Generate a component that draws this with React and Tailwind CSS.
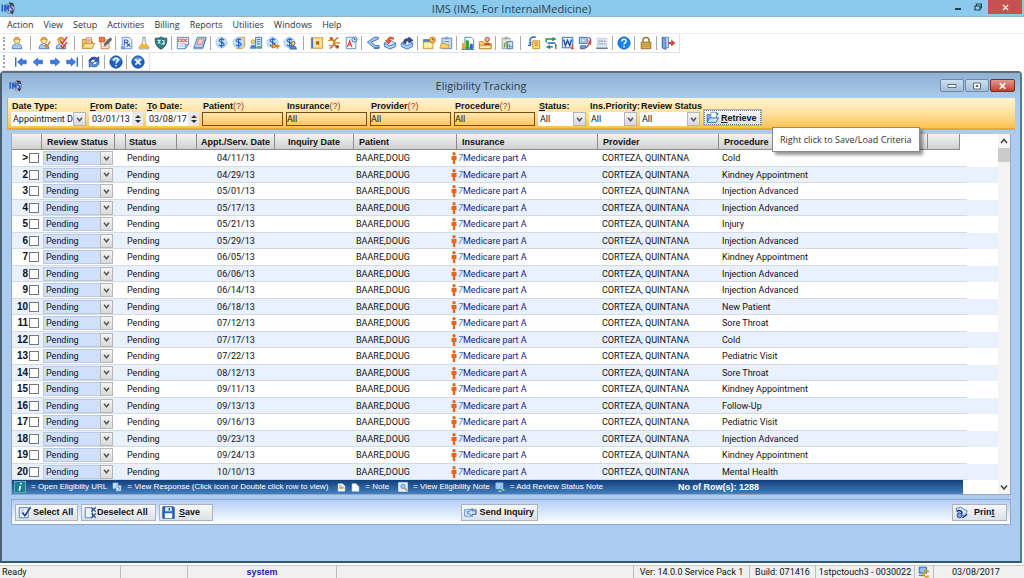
import { useState } from 'react';

const menuItems = ['Action', 'View', 'Setup', 'Activities', 'Billing', 'Reports', 'Utilities', 'Windows', 'Help'];

const rows = [
  ['04/11/13', 'Cold'],
  ['04/29/13', 'Kindney Appointment'],
  ['05/01/13', 'Injection Advanced'],
  ['05/17/13', 'Injection Advanced'],
  ['05/21/13', 'Injury'],
  ['05/29/13', 'Injection Advanced'],
  ['06/05/13', 'Kindney Appointment'],
  ['06/06/13', 'Injection Advanced'],
  ['06/14/13', 'Injection Advanced'],
  ['06/18/13', 'New Patient'],
  ['07/12/13', 'Sore Throat'],
  ['07/17/13', 'Cold'],
  ['07/22/13', 'Pediatric Visit'],
  ['08/12/13', 'Sore Throat'],
  ['09/11/13', 'Kindney Appointment'],
  ['09/13/13', 'Follow-Up'],
  ['09/16/13', 'Pediatric Visit'],
  ['09/23/13', 'Injection Advanced'],
  ['09/24/13', 'Kindney Appointment'],
  ['10/10/13', 'Mental Health'],
];

const person = (
  <>
    <path d="M2.500 14.500c0-4 2-5.500 5.500-5.500s5.500 1.500 5.500 5.500z" fill="#a9cdf5" stroke="#3f74bd" />
    <path d="M6.500 9l1.500 2.500 1.500-2.500" fill="#fff" stroke="#6f9bd2" strokeWidth=".7" />
    <circle cx="8" cy="5" r="3.600" fill="#fbe0ac" stroke="#c9902f" />
    <path d="M4.400 4.800C4 1 12 1 11.600 4.800 10 3.500 6.500 3.500 4.400 4.800z" fill="#e8b53c" stroke="#b5812a" strokeWidth=".6" />
  </>
);

const dollar = (
  <>
    <path d="M7 1l5 2 2 5-2 4-5 2-5-3-1-5 2-3z" fill="#cfe4fb" stroke="#8fbbe9" strokeWidth=".8" />
    <path d="M10.500 4.700C9 3 4.700 3.300 4.800 5.400c.1 2.200 5.700 1.600 5.700 4 0 2.200-4.500 2.400-6 .6M7.600 2v11.500" fill="none" stroke="#2a6cc4" strokeWidth="1.400" />
  </>
);

const blueDisc = (
  <>
    <circle cx="8" cy="8" r="7" fill="#1f62c9" stroke="#123f8f" />
    <path d="M2.500 6C4 1.500 12 1.500 13.500 6 10 8 6 8 2.500 6z" fill="#8dbdf3" opacity=".7" />
  </>
);

const question = (
  <>
    <path d="M5.600 6.200c0-3.400 5-3.200 4.900-.3C10.400 7.600 8 7.800 8 9.800" fill="none" stroke="#fff" strokeWidth="1.700" />
    <circle cx="8" cy="12" r="1" fill="#fff" />
  </>
);

const page = <path d="M2.500 1.500h8l3 3v10h-11z" fill="#f3f8ff" stroke="#5b87c5" />;

const glyphs = {
  user: person,
  userCheck: (
    <>
      {person}
      <path d="M9 10l2 3 4-7" fill="none" stroke="#e2722b" strokeWidth="1.700" />
    </>
  ),
  userChecks: (
    <>
      {person}
      <path d="M7 5l2.500 3.500L15 1M8 11l2 3 4.500-7" fill="none" stroke="#df3f23" strokeWidth="1.800" />
    </>
  ),
  folder: (
    <>
      <path d="M1.500 14V4h4l1.500 2h6v8z" fill="#f3c45a" stroke="#c58a26" />
      <path d="M6 2h6v7H6z" fill="#fff" stroke="#bf7b3b" />
      <path d="M8 3.500v4M10 3.500v4" stroke="#d0502e" />
      <path d="M1.500 14l2.500-5.500h11.500L13 14z" fill="#ffe09a" stroke="#c58a26" />
    </>
  ),
  edit: (
    <>
      <path d="M3.500 4.500h9v10h-9z" fill="#fff3e0" stroke="#d26d32" />
      <path d="M1.500 1.500h6v5h-6z" fill="#ef7b3e" stroke="#c8501d" />
      <path d="M5.500 8h5M5.500 12h5" stroke="#d99a72" />
      <path d="M7 11l1-3 6-6 2 2-6 6z" fill="#5f6d7a" stroke="#2e3a46" strokeWidth=".6" />
    </>
  ),
  rx: (
    <>
      {page}
      <path d="M5 11V4.500h2.500c2.300 0 2.300 3 0 3H5M7 7.500l5 5M11.500 8.500l-4 4" fill="none" stroke="#2458a8" strokeWidth="1.200" />
      <path d="M1 12h5v3H1z" fill="#6d9ad6" />
    </>
  ),
  flask: (
    <>
      <path d="M6 1.500h4M6.700 2v5L2 13.500c0 1 .5 1.200 1.200 1.200h9.600c.7 0 1.200-.2 1.200-1.200L9.300 7V2" fill="#fffbe8" stroke="#7c8fa8" />
      <path d="M5 9h6l3 5H2z" fill="#f5b82e" />
    </>
  ),
  shield: (
    <>
      <path d="M8 1c2 1.500 4.500 1.700 6.500 1.500C15 9 12.500 13 8 15 3.500 13 1 9 1.500 2.500 3.500 2.700 6 2.500 8 1z" fill="#2f7f86" stroke="#1c4b58" />
      <path d="M4 5h3L5 8h2.500M9 5.500c3-1.500 4 1 .5 3.500h3" fill="none" stroke="#d6f3f0" strokeWidth="1.200" />
    </>
  ),
  doc: (
    <>
      <path d="M1.500 1.500h13v8l-4 5h-9z" fill="#fff" stroke="#4d75b8" />
      <path d="M3 3.500h3v3H3zM7 3.500h2.500v3H7zM13.500 3.500H11v3h2.500" fill="none" stroke="#d04a35" />
      <path d="M3 9h8M3 11.500h6" stroke="#8aa6d4" />
      <path d="M10.500 14.500v-5h4z" fill="#9fc0ef" stroke="#4d75b8" strokeWidth=".7" />
    </>
  ),
  book: (
    <>
      <path d="M5 1.500h10L11 13H1z" fill="#b8d6f8" stroke="#4879bd" />
      <path d="M6.500 3.500h6l-2.500 6H4.200z" fill="#f9cfc3" stroke="#d8694c" strokeWidth=".8" />
      <path d="M1 13v1.500h10L15 3" fill="none" stroke="#4879bd" />
    </>
  ),
  dollar,
  dollarNote: (
    <>
      <path d="M8.500 1.500h6v10l-3 3h-6z" fill="#ffe3a0" stroke="#d08f2c" />
      {dollar}
    </>
  ),
  dollarDesk: (
    <>
      <path d="M7.500 1.500h7v12h-7z" fill="#cfe2fa" stroke="#386db5" />
      <path d="M9 4h4M9 6.500h4M9 9h4" stroke="#386db5" />
      <circle cx="4.500" cy="6.500" r="2.300" fill="#f8cf83" stroke="#b5812a" strokeWidth=".7" />
      <path d="M1 14.500c0-6 7.500-6 7.500 0z" fill="#4b86d1" />
      <path d="M9 14.500h6v-3H9z" fill="#58b26a" />
    </>
  ),
  dollarKey: (
    <>
      {dollar}
      <path d="M9 11.500h6.500M13 11.500v3" stroke="#dc8620" strokeWidth="2.200" />
      <circle cx="9" cy="11.500" r="2" fill="#f6b13f" stroke="#b96c15" />
    </>
  ),
  dollarUser: (
    <>
      {dollar}
      <circle cx="11.500" cy="8.500" r="2.200" fill="#f8cf83" stroke="#5b4a26" strokeWidth=".8" />
      <path d="M8 15c0-5 7.500-5 7.500 0z" fill="#4b86d1" stroke="#274e87" strokeWidth=".6" />
    </>
  ),
  calendar: (
    <>
      <path d="M1.500 2h13v12h-13z" fill="#ffd95c" stroke="#c58a26" />
      <path d="M5 2v12M8 2v12M11.500 2v12M2 5h12M2 8h12M2 11h12" stroke="#fff4c4" strokeWidth=".8" />
      <path d="M7 6h3.500v4H7z" fill="#b4631b" />
      <path d="M1.500 2v12h2V2z" fill="#4b79bf" />
    </>
  ),
  helix: (
    <>
      <path d="M3 2c8 1 3 11 10 12M13 2C6 3 10 13 3 14" fill="none" stroke="#c5782a" strokeWidth="1.700" />
      <path d="M1 5h7M8 8h7M2 11h5" stroke="#d9912f" strokeWidth="1.500" />
      <circle cx="5" cy="3" r="1.700" fill="#c94e2a" />
      <circle cx="12" cy="12" r="1.700" fill="#88502a" />
    </>
  ),
  letter: (
    <>
      {page}
      <path d="M4 12.500l2.500-7 2.500 7M5 10h3.500" fill="none" stroke="#d04632" strokeWidth="1.300" />
      <circle cx="12" cy="4" r="3" fill="#cfe2fa" stroke="#386db5" />
      <path d="M12 2.500V4h1.500" fill="none" stroke="#274e87" />
    </>
  ),
  fold: (
    <>
      <path d="M14 1.500H9.500L1.500 7l8 6.500h5.500v-2.500h-4L6 7l8-3.500z" fill="#a5cbf5" stroke="#2d62ad" />
      <path d="M9 14h6" stroke="#2d62ad" strokeWidth="1.300" />
    </>
  ),
  boxIn: (
    <>
      <path d="M1.500 8l6.500 3 6.500-3v4L8 15l-6.500-3z" fill="#a9ccf5" stroke="#3d74bf" />
      <path d="M1.500 8L8 5l6.500 3L8 11z" fill="#e3effd" stroke="#3d74bf" strokeWidth=".8" />
      <path d="M12 2C8 0 5 2 5 5H2.500l4 4 3-4H7.500c0-2 2-2.500 4.500-1z" fill="#e55a33" stroke="#ad3413" strokeWidth=".6" />
    </>
  ),
  boxOut: (
    <>
      <path d="M1.500 8l6.500 3 6.500-3v4L8 15l-6.500-3z" fill="#a9ccf5" stroke="#3d74bf" />
      <path d="M1.500 8L8 5l6.500 3L8 11z" fill="#e3effd" stroke="#3d74bf" strokeWidth=".8" />
      <path d="M4 8c0-4 2-5.500 6-5.200V1l5 4-5 3V5.500C7.500 5.300 6.500 6 6.500 9z" fill="#2b4b8c" stroke="#182c58" strokeWidth=".6" />
    </>
  ),
  schedule: (
    <>
      <path d="M1.500 4h11v10.500h-11z" fill="#ffdf83" stroke="#c5872b" />
      <path d="M1.500 4h11v3h-11z" fill="#4f86d0" />
      <path d="M5 7.500V14M9 7.500V14M2 10.500h10" stroke="#fff" />
      <circle cx="12" cy="4.500" r="3.300" fill="#ffc158" stroke="#c4701b" />
      <path d="M12 2.500v2h2" fill="none" stroke="#8c4a10" />
    </>
  ),
  clipboard: (
    <>
      <path d="M3.500 2.500h11v12h-11z" fill="#cbdffa" stroke="#4d7cc0" />
      <path d="M7 1h4v3H7z" fill="#86a7d6" />
      <path d="M6 6.500h6" stroke="#4d7cc0" />
      <path d="M1 14l1.500-5.500h4L8 10h4l-1.500 4z" fill="#ffd36b" stroke="#c18226" strokeWidth=".8" />
    </>
  ),
  chart: (
    <>
      <path d="M4.500 1.500h7l3 3v9h-10z" fill="#fff" stroke="#4879bd" />
      <path d="M1 8h3.500v7H1z" fill="#f0a932" />
      <path d="M5.500 5h3.500v10H5.500z" fill="#2f9d43" />
      <path d="M10 9h3.500v6H10z" fill="#2e66b8" />
      <path d="M.5 15.300h15" stroke="#275ba8" />
    </>
  ),
  folderUser: (
    <>
      <path d="M1.500 14.500v-8h5l1.500 2h7v6z" fill="#ffd36b" stroke="#c18226" />
      <circle cx="10.500" cy="4" r="2.500" fill="#f6b58a" stroke="#a3402a" />
      <path d="M6.500 10.500c0-4 8-4 8 0z" fill="#cf4a32" />
      <path d="M1.500 14.500v-4h13.500v4z" fill="#ffe7a8" stroke="#c18226" />
    </>
  ),
  report: (
    <>
      <path d="M2.500 2.500h9v12h-9z" fill="#ece7da" stroke="#8d99ae" />
      <path d="M5 1h4v3H5z" fill="#9caac2" />
      <path d="M5 13V8M7 13V6" stroke="#5aa65e" strokeWidth="1.300" />
      <path d="M8.500 6.500h6v8h-6z" fill="#d7e8fc" stroke="#3c6eb4" />
      <path d="M10.500 13V9.500M12.500 13V11" stroke="#3c6eb4" strokeWidth="1.200" />
    </>
  ),
  copyNote: (
    <>
      <path d="M6.500 5.500h8v9h-8z" fill="#ffdc72" stroke="#c5872b" />
      <path d="M8.500 8h4M8.500 10.500h4" stroke="#a66a1c" />
      <path d="M10 1.500C5 .5 2.500 3 4 6M1.500 10c1 1.500 2.500 1 3-1" fill="none" stroke="#2d62ad" strokeWidth="1.700" />
      <path d="M1.500 6.500h4L3.500 10z" fill="#2d62ad" />
    </>
  ),
  transfer: (
    <>
      <path d="M2.500 7V3.500H10M13.500 9v3.500" fill="none" stroke="#2f8f49" strokeWidth="1.700" />
      <path d="M9.500 1l5 2.500-5 2.500zM7 10l-5 2.500L7 15z" fill="#2f8f49" />
      <path d="M4 8h9M7 12.500h3" stroke="#3c78cc" strokeWidth="2" />
      <path d="M13.500 12v3" stroke="#dc4b2c" strokeWidth="1.500" />
    </>
  ),
  word: (
    <>
      <path d="M1.500 1.500h12v12h-12z" fill="#e7f0fd" stroke="#2c5cab" />
      <path d="M3 4l2 7 2.500-6L10 11l2-7" fill="none" stroke="#2451a3" strokeWidth="1.700" />
      <path d="M13 9.500v5M11.500 14.500h3" stroke="#d94329" strokeWidth="1.300" />
    </>
  ),
  card: (
    <>
      <path d="M1.500 1.500h9v7h-9z" fill="#bcd7f8" stroke="#2c5cab" />
      <path d="M4 3.500h4v3H4z" fill="#fff" stroke="#5c7fb5" strokeWidth=".7" />
      <path d="M3 14.500c5 0 9-2 9.500-6l2 .5V3.500l-2.500-2" fill="none" stroke="#8a4e86" strokeWidth="1.400" />
      <path d="M2.500 11h7l-2 3.500h-5z" fill="#6b94d0" stroke="#2c5cab" strokeWidth=".7" />
      <path d="M13 5v5" stroke="#e05a2d" strokeWidth="2" />
    </>
  ),
  keypad: (
    <>
      <path d="M2.500 2.500h11v12h-11z" fill="#dde7f2" stroke="#c4d1e0" />
      <path d="M4 6h2.500M7 6h2M10 6h2M4 9h2.500M7 9h2M10 9h2" stroke="#93abc8" strokeWidth="1.500" />
      <path d="M1.500 14h13" stroke="#5a6877" strokeWidth="1.400" />
    </>
  ),
  help: (
    <>
      <circle cx="8" cy="8" r="7" fill="#1783ee" stroke="#1162bd" />
      {question}
    </>
  ),
  helpDark: (
    <>
      {blueDisc}
      {question}
    </>
  ),
  lock: (
    <>
      <path d="M4.500 7V5c0-4.500 7-4.500 7 0v2" fill="none" stroke="#8d7a45" strokeWidth="1.700" />
      <path d="M2.500 7h11v7.500h-11z" fill="#e3b650" stroke="#8b6420" />
      <path d="M3 9.500h10M3 12h10" stroke="#b88a31" />
    </>
  ),
  exit: (
    <>
      <path d="M1.500 1.500h7v12h-7z" fill="#cfe0f6" stroke="#5378ae" />
      <path d="M1.500 1.500l4 2v12l-4-2z" fill="#7ba6e0" stroke="#3f6cb0" />
      <path d="M9 7h3V4.500L16 8l-4 3.500V9H9z" fill="#d8492f" stroke="#9b2c17" strokeWidth=".5" />
    </>
  ),
  first: (
    <>
      <path d="M2 2.500v11" stroke="#2a5dc4" strokeWidth="1.500" />
      <path d="M4 8l5-4.500v2.500h5v4H9v2.500z" fill="#3f7be0" stroke="#2a5dc4" strokeWidth=".8" />
    </>
  ),
  prev: <path d="M2.500 8l5-4.500v2.500H13v4H7.500v2.500z" fill="#3f7be0" stroke="#2a5dc4" strokeWidth=".8" />,
  next: <path d="M13.500 8l-5-4.500v2.500H3v4h5.500v2.500z" fill="#3f7be0" stroke="#2a5dc4" strokeWidth=".8" />,
  last: (
    <>
      <path d="M14 2.500v11" stroke="#2a5dc4" strokeWidth="1.500" />
      <path d="M12 8L7 3.500v2.500H2v4h5v2.500z" fill="#3f7be0" stroke="#2a5dc4" strokeWidth=".8" />
    </>
  ),
  refresh: (
    <>
      <path d="M2 7.500C2.500 3 8 1 11.500 3.500L13.500 2v5.500H8l2-2C7.500 4 5 5 4.500 7.500z" fill="#2a5fb5" stroke="#173a7a" strokeWidth=".7" />
      <path d="M14 8.500c-.5 4.500-6 6.500-9.500 4L2.500 14V8.500H8l-2 2c2.500 1.500 5 .5 5.500-2z" fill="#5b95df" stroke="#173a7a" strokeWidth=".7" />
    </>
  ),
  close: (
    <>
      {blueDisc}
      <path d="M5 5l6 6M11 5l-6 6" stroke="#fff" strokeWidth="1.800" />
    </>
  ),
  logo: (
    <>
      <circle cx="10" cy="8.500" r="5.500" fill="#d8c8bb" stroke="#6a5a58" strokeWidth=".7" />
      <path d="M9 1.500l5 1 1 4-4-1zM10 12l3 3.500 2-4z" fill="#3b302f" />
      <path d="M1.500 4v8M4.500 12V4.500L6.500 9l2-4.500V12M13.500 5C10 4 10 7.500 12 8c2.500.8 1.500 4.500-1.500 3.500" fill="none" stroke="#2c63d0" strokeWidth="2" />
    </>
  ),
  openFolder: (
    <>
      <path d="M1.500 13V4.500h4L7 6h6v7z" fill="#86b5ec" stroke="#1f5aa8" />
      <path d="M6 1.500h5l2 2V9H6z" fill="#fff" stroke="#3f74bd" strokeWidth=".8" />
      <path d="M1.500 14l3-5.500h11L12.500 14z" fill="#cfe4fb" stroke="#1f5aa8" />
      <path d="M12 2c2 0 2.500 1.500 2.500 3" fill="none" stroke="#2f9d63" strokeWidth="1.400" />
    </>
  ),
  selectAll: (
    <>
      <path d="M1.500 2h11v12.500h-11z" fill="#eaf3fe" stroke="#3a6fb5" />
      <path d="M3.500 5h4M3.500 7.500h3M3.500 10h2" stroke="#7fa6d8" />
      <path d="M5.500 8l3 4L15.500 1.500" fill="none" stroke="#123c85" strokeWidth="1.800" />
    </>
  ),
  deselectAll: (
    <>
      <path d="M1.500 2h6l3 3v9.500h-9z" fill="#eaf3fe" stroke="#3a6fb5" />
      <path d="M9 1.500l5.500 5.500M14.500 1.500L9 7M9 9l5.500 5.500M14.500 9L9 14.500" stroke="#1d4b95" strokeWidth="1.500" />
    </>
  ),
  save: (
    <>
      <path d="M1 1h13l1 1v13H1z" fill="#2b6cc4" stroke="#123c85" />
      <path d="M4 1.500h8v5H4z" fill="#dcebfc" />
      <path d="M3.500 9h9v6h-9z" fill="#fff" />
      <path d="M9 2.500v3" stroke="#123c85" strokeWidth="1.500" />
    </>
  ),
  send: (
    <>
      <path d="M.8 4.500h8v8h-8zM9 4.500h6v6H9" fill="#e2eefc" stroke="#4a7fc6" />
      <path d="M3 7h4M3 9.500h3" stroke="#4a7fc6" />
      <path d="M5 8l5-5v3h4.500v4H10v3z" fill="#d3e5fb" stroke="#2d62ad" />
    </>
  ),
  print: (
    <>
      <path d="M1 3l6-1.500L15 6l-2 5-7 1z" fill="#d5e6fb" stroke="#3b6cb4" />
      <path d="M2 6.500c4-2 8 0 6 3.500" fill="none" stroke="#172f7d" strokeWidth="1.800" />
      <circle cx="5.500" cy="11.500" r="3" fill="#7aa5e6" stroke="#172f7d" />
      <path d="M9 14.500l6-4" stroke="#172f7d" strokeWidth="1.600" />
    </>
  ),
  info: (
    <>
      <path d="M0 0h16v16H0z" fill="#1f7f92" stroke="#7ed3dc" strokeWidth="1.500" />
      <path d="M9.500 2.500L9 4.500M8.500 6.500L7 13" stroke="#fff" strokeWidth="2" />
    </>
  ),
  response: (
    <>
      <path d="M1.500 1.500h8v9h-8z" fill="#d5e7fc" stroke="#7cadea" />
      <path d="M6.500 5.500h8v9h-8z" fill="#eaf3fe" stroke="#4f8ad6" />
      <path d="M8.500 9c3-2.500 5 1 2 3.500" fill="none" stroke="#2a62b5" strokeWidth="1.500" />
    </>
  ),
  note: (
    <>
      <path d="M2 1.500h8l4 4v9H2z" fill="#fff" stroke="#d6dbe0" />
      <path d="M4 5h5M4 10h8" stroke="#d6a22f" strokeWidth="1.500" />
      <path d="M4 7.500h8" stroke="#4f8f4c" strokeWidth="1.500" />
    </>
  ),
  blank: <path d="M2 1.500h7l5 5v8H2z" fill="#fff" stroke="#dbe6f4" />,
  viewNote: (
    <>
      <path d="M1 1h14v14H1z" fill="#e6edf4" stroke="#fff" />
      <circle cx="8" cy="7" r="3.500" fill="#9cc6f2" stroke="#3872b8" />
      <path d="M10.500 9.500l4 4" stroke="#c08a35" strokeWidth="2" />
    </>
  ),
  addNote: (
    <>
      <path d="M1.500 1.500h11v9h-11z" fill="#7eb6f2" stroke="#cfe6fd" />
      <path d="M4 5h6M4 8h4" stroke="#fff" />
      <path d="M9 9l6 5M5 14.500h6" stroke="#8fdd9f" strokeWidth="2.200" />
    </>
  ),
  network: (
    <>
      <path d="M1.500 1.500h10v8h-10z" fill="#67a5ea" stroke="#2c5cab" />
      <path d="M3 4h7M3 6.500h5" stroke="#dcebfc" />
      <path d="M14.500 7.500c-4-2-7 0-7 3s3 5 7 3" fill="none" stroke="#e59a25" strokeWidth="2.500" />
      <path d="M1 12.500h6" stroke="#5d7fae" strokeWidth="2" />
    </>
  ),
};

function Icon({ name, className = 'w-[14px] h-[14px]' }) {
  return (
    <svg viewBox="0 0 16 16" className={`shrink-0 ${className}`} aria-hidden="true">
      {glyphs[name]}
    </svg>
  );
}

// '|' is a narrow separator, '||' a wide one
const mainTools = [
  'user', '||', 'userCheck', 'userChecks', '||', 'folder', 'edit', '|', 'rx', 'flask', 'shield', '|', 'doc', 'book', '|',
  'dollar', 'dollarNote', 'dollarDesk', 'dollarKey', 'dollarUser', '||', 'calendar', 'helix', 'letter', '|',
  'fold', 'boxIn', 'boxOut', '|', 'schedule', 'clipboard', '|', 'chart', 'folderUser', '|', 'report', '||',
  'copyNote', 'transfer', 'word', 'card', 'keypad', '|', 'help', '|', 'lock', '|', 'exit',
];
const navTools = ['first', 'prev', 'next', 'last', '|', 'refresh', '|', 'helpDark', '|', 'close'];

function Toolbar({ tools, className = 'h-[19px]', gripClass = 'mr-[3px]' }) {
  return (
    <div className={`flex w-fit items-center px-[3px] border-r border-b border-[#dfe3ea] ${className}`}>
      <div className={`h-[13px] border-l-2 border-dotted border-[#9aa4b4] ${gripClass}`} />
      {tools.map((tool, i) =>
        tool.startsWith('|') ? (
          <div key={i} className={`flex justify-center shrink-0 ${tool === '||' ? 'w-[10px]' : 'w-[5px]'}`}>
            <div className="w-px h-[14px] bg-[#a9a9a9]" />
          </div>
        ) : (
          <button key={i} type="button" aria-label={tool} className="flex w-[17px] justify-center shrink-0">
            <Icon name={tool} />
          </button>
        )
      )}
    </div>
  );
}

function Select({ id, label, value, className, selectClass = 'bg-white' }) {
  return (
    <div className={`relative ${className}`}>
      <select
        id={id}
        aria-label={label}
        defaultValue={value}
        className={`block w-full h-[14px] appearance-none pl-[2px] pr-[13px] text-[9px] leading-[12px] outline-none ${selectClass}`}
      >
        <option>{value}</option>
      </select>
      <div className="pointer-events-none absolute right-0 top-0 flex h-[14px] w-[13px] items-center justify-center border border-[#b5b5b5] bg-linear-to-b from-[#f4f4f4] to-[#d9d9d9]">
        <svg viewBox="0 0 8 6" className="w-[7px] h-[5px]" aria-hidden="true">
          <path d="M1 1l3 3.500L7 1" fill="none" stroke="#555" strokeWidth="1.800" />
        </svg>
      </div>
    </div>
  );
}

function Field({ id, label, hint, accessKey, className, children }) {
  return (
    <div className={`shrink-0 ${className}`}>
      <label htmlFor={id} className="block h-[12px] pl-[1px] whitespace-nowrap font-['Liberation_Sans'] text-[9px] leading-[12px] font-bold">
        {accessKey && <u>{accessKey}</u>}
        {label}
        {hint && <span className="font-normal text-[#a5371e]">(?)</span>}
      </label>
      {children}
    </div>
  );
}

function DateInput({ id, value }) {
  return (
    <div className="flex h-[14px] bg-white">
      <input id={id} defaultValue={value} className="min-w-0 flex-1 pl-[3px] text-[9px] outline-none" />
      <div className="flex w-[11px] items-center justify-center bg-[#e9e9e9]">
        <svg viewBox="0 0 8 10" className="w-[8px] h-[10px]" aria-hidden="true">
          <path d="M1 4l3-3 3 3zM1 6l3 3 3-3z" fill="#333" />
        </svg>
      </div>
    </div>
  );
}

function LookupInput({ id, value }) {
  return (
    <input
      id={id}
      defaultValue={value}
      className="block w-full h-[14px] border border-[#7a4a12] bg-linear-to-b from-[#ffe9b4] to-[#ffc55c] text-[9px] leading-[12px] outline-none"
    />
  );
}

function PushButton({ icon, label, before = '', accessKey = '', className }) {
  return (
    <button
      type="button"
      className={`flex h-[17px] shrink-0 items-center whitespace-nowrap border border-[#a9b3bf] bg-linear-to-b from-[#f7f8fa] to-[#dde0e5] px-[2px] font-['Liberation_Sans'] text-[9px] font-bold ${className}`}
    >
      <Icon name={icon} className="w-[13px] h-[13px]" />
      <span>
        {before}
        {accessKey && <u>{accessKey}</u>}
        {label}
      </span>
    </button>
  );
}

function HeadCell({ children, span, className = 'pl-[5px] text-left' }) {
  return (
    <th
      colSpan={span}
      className={`h-[16px] p-0 border-r border-b border-[#8d8d8d] bg-linear-to-b from-[#f4f4f4] to-[#cfcfcf] font-['Liberation_Sans'] text-[9px] leading-[12px] font-bold whitespace-nowrap ${className}`}
    >
      {children}
    </th>
  );
}

function EligibilityTable() {
  const [selected, setSelected] = useState([]);

  const toggle = (i) => {
    setSelected((prev) => (prev.includes(i) ? prev.filter((n) => n !== i) : [...prev, i]));
  };

  return (
    <table className="w-full table-fixed border-separate border-spacing-0">
      <colgroup>
        <col className="w-[30px]" />
        <col className="w-[73px]" />
        <col className="w-[11px]" />
        <col className="w-[51px]" />
        <col className="w-[20px]" />
        <col className="w-[78px]" />
        <col className="w-[79px]" />
        <col className="w-[97px]" />
        <col className="w-[6px]" />
        <col className="w-[141px]" />
        <col className="w-[121px]" />
        <col className="w-[209px]" />
        <col className="w-[32px]" />
        <col className="w-[7px]" />
        <col />
      </colgroup>
      <thead>
        <tr>
          <HeadCell />
          <HeadCell>Review Status</HeadCell>
          <HeadCell />
          <HeadCell className="pl-[3px] text-left">Status</HeadCell>
          <HeadCell />
          <HeadCell className="text-center">Appt./Serv. Date</HeadCell>
          <HeadCell className="text-center">Inquiry Date</HeadCell>
          <HeadCell span={2}>Patient</HeadCell>
          <HeadCell>Insurance</HeadCell>
          <HeadCell>Provider</HeadCell>
          <HeadCell>Procedure</HeadCell>
          <HeadCell />
          <td colSpan={2} />
        </tr>
      </thead>
      <tbody>
        {rows.map(([date, procedure], i) => (
          <tr
            key={i}
            className="h-[17px] even:h-[16px] even:bg-[#e9f0fe] [&>td]:p-0 [&>td]:whitespace-nowrap [&>td:not(:last-child)]:border-b [&>td]:border-[#d5dae2]"
          >
            <td>
              <div className="flex items-center justify-end gap-px pr-[3px]">
                <span className="font-['Liberation_Sans'] text-[10px] leading-[12px] font-bold">{i === 0 ? '>' : i + 1}</span>
                <input
                  type="checkbox"
                  aria-label={`Select row ${i + 1}`}
                  checked={selected.includes(i)}
                  onChange={() => toggle(i)}
                  className="w-[10px] h-[10px] appearance-none border border-[#777] bg-white checked:bg-[#2b6cc4]"
                />
              </div>
            </td>
            <td>
              <Select
                label={`Review status ${i + 1}`}
                value="Pending"
                className="ml-px mr-[2px]"
                selectClass="bg-[#cfdffc] border border-[#b9c9e6]"
              />
            </td>
            <td />
            <td>
              <div className="pl-px">Pending</div>
            </td>
            <td />
            <td className="text-center">{date}</td>
            <td />
            <td>
              <div className="pl-[2px]">BAARE,DOUG</div>
            </td>
            <td>
              <svg viewBox="0 0 6 12" className="block w-[6px] h-[12px]" aria-hidden="true">
                <circle cx="3" cy="1.700" r="1.700" fill="#e5661c" />
                <path d="M.5 4h5v4H4.200v4H1.800V8H.5z" fill="#e5661c" />
              </svg>
            </td>
            <td>
              <div className="flex pl-px text-[#1a1a80]">
                <i className="text-[#2a7bd0]">7</i>
                Medicare part A
              </div>
            </td>
            <td>
              <div className="pl-[4px]">CORTEZA, QUINTANA</div>
            </td>
            <td>
              <div className="pl-[3px]">{procedure}</div>
            </td>
            <td />
            <td />
            <td />
          </tr>
        ))}
      </tbody>
    </table>
  );
}

function Legend() {
  return (
    <div className="mr-[35px] flex h-[14px] items-center gap-[5px] bg-linear-to-b from-[#123f7c] to-[#4580bf] pl-[2px] whitespace-nowrap font-['Liberation_Sans'] text-[8px] text-white">
      <Icon name="info" className="w-[12px] h-[12px]" />
      <span>= Open Eligiblity URL</span>
      <Icon name="response" className="w-[10px] h-[10px]" />
      <span className="mr-[4px]">= View Response (Click icon or Double click row to view)</span>
      <Icon name="note" className="w-[9px] h-[9px]" />
      <Icon name="blank" className="w-[9px] h-[9px]" />
      <span className="mr-[4px]">= Note</span>
      <Icon name="viewNote" className="w-[10px] h-[10px]" />
      <span>= View Eligibility Note</span>
      <Icon name="addNote" className="w-[10px] h-[10px]" />
      <span>= Add Review Status Note</span>
      <span className="ml-auto mr-[204px] text-[9px] font-bold">No of Row(s): 1288</span>
    </div>
  );
}

function StatusCell({ className = '', children }) {
  return <div className={`flex h-full shrink-0 items-center justify-center border-r border-[#bdbdbd] ${className}`}>{children}</div>;
}

export default function App() {
  return (
    <div className="flex min-h-screen flex-col bg-white font-['Roboto',sans-serif] text-[9px] leading-[12px] text-[#111]">
      {/* Title bar */}
      <header className="flex h-[17px] items-start border-b border-[#8fb3c9] bg-[#8bcaec]">
        <div className="flex flex-1 pl-px pt-px">
          <Icon name="logo" />
        </div>
        <h1 className="font-['Open_Sans'] text-[11px] leading-[17px] text-[#2b4557]">IMS (IMS, For InternalMedicine)</h1>
        <div className="flex flex-1 justify-end pr-[2px]">
          <button type="button" aria-label="Minimize" className="flex h-[14px] w-[20px] items-center justify-center">
            <svg viewBox="0 0 8 8" className="w-[8px] h-[8px]"><path d="M1 6h6" stroke="#22404f" strokeWidth="2" /></svg>
          </button>
          <button type="button" aria-label="Restore" className="flex h-[14px] w-[20px] items-center justify-center">
            <svg viewBox="0 0 8 8" className="w-[8px] h-[8px]">
              <path d="M1 3h5v4H1zM2.500 3V1h5v4H6" fill="none" stroke="#22404f" strokeWidth="1.200" />
            </svg>
          </button>
          <button type="button" aria-label="Close" className="flex h-[14px] w-[34px] items-center justify-center bg-[#c75050]">
            <svg viewBox="0 0 8 8" className="w-[7px] h-[7px]"><path d="M1 1l6 6M7 1L1 7" stroke="#fff" strokeWidth="1.500" /></svg>
          </button>
        </div>
      </header>

      {/* Menu and toolbars */}
      <nav className="flex h-[17px] items-center gap-[10px] border-b border-[#ececec] pl-[7px] font-['Open_Sans'] text-[9px] text-[#333]">
        {menuItems.map((item) => (
          <button key={item} type="button">{item}</button>
        ))}
      </nav>
      <Toolbar tools={mainTools} />
      <Toolbar tools={navTools} className="h-[18px]" gripClass="mr-[7px]" />

      {/* Eligibility window */}
      <main className="mr-[2px] flex flex-1 flex-col rounded-t-sm border-2 border-t-[#5f6f7f] border-r-[#4f7f95] border-b-[#2e5a70] border-l-[#4a5f70] bg-[#abcbf1]">
        <div className="flex h-[25px] shrink-0 items-center gap-[4px] bg-linear-to-b from-[#8fb1d2] to-[#abcbea] pl-[7px] pr-[5px]">
          <div className="flex w-[42%]">
            <Icon name="logo" className="w-[13px] h-[13px]" />
          </div>
          <h2 className="font-['Open_Sans'] text-[11px] text-[#2b3d4d]">Eligibility Tracking</h2>
          <div className="flex flex-1 justify-end gap-px">
            <button type="button" aria-label="Minimize window" className="flex h-[13px] w-[24px] items-center justify-center rounded-[2px] border border-[#6e8bab] bg-linear-to-b from-[#cfdfef] to-[#a3bed9]">
              <svg viewBox="0 0 10 6" className="w-[10px] h-[6px]"><path d="M1 1.500h8v3H1z" fill="#fff" stroke="#5d6b79" /></svg>
            </button>
            <button type="button" aria-label="Maximize window" className="flex h-[13px] w-[24px] items-center justify-center rounded-[2px] border border-[#6e8bab] bg-linear-to-b from-[#cfdfef] to-[#a3bed9]">
              <svg viewBox="0 0 10 8" className="w-[10px] h-[8px]"><path d="M1.500 1h7v6h-7zM4 3.500h2v1H4z" fill="#fff" stroke="#5d6b79" /></svg>
            </button>
            <button type="button" aria-label="Close window" className="flex h-[13px] w-[25px] items-center justify-center rounded-[2px] border border-[#7d2c22] bg-linear-to-b from-[#e39b8e] to-[#c23f2b]">
              <svg viewBox="0 0 10 8" className="w-[9px] h-[8px]"><path d="M2 1l6 6M8 1L2 7" stroke="#fff" strokeWidth="1.800" /></svg>
            </button>
          </div>
        </div>

        {/* Filters */}
        <form className="relative mx-[5px] flex h-[32px] shrink-0 items-start gap-[3px] border-b-2 border-l border-[#e3a93f] bg-linear-to-b from-[#fff4d2] via-[#ffe2a0] to-[#ffc14a] pt-[2px] pl-[3px]">
          <Field id="date-type" label="Date Type:" className="w-[75px]">
            <Select id="date-type" value="Appointment Date" />
          </Field>
          <Field id="from-date" accessKey="F" label="rom Date:" className="w-[54px]">
            <DateInput id="from-date" value="03/01/13" />
          </Field>
          <Field id="to-date" accessKey="T" label="o Date:" className="w-[53px]">
            <DateInput id="to-date" value="03/08/17" />
          </Field>
          <Field id="patient" label="Patient" hint className="w-[81px]">
            <LookupInput id="patient" value="" />
          </Field>
          <Field id="insurance" label="Insurance" hint className="w-[81px]">
            <LookupInput id="insurance" value="All" />
          </Field>
          <Field id="provider" label="Provider" hint className="w-[81px]">
            <LookupInput id="provider" value="All" />
          </Field>
          <Field id="procedure" label="Procedure" hint className="w-[81px]">
            <LookupInput id="procedure" value="All" />
          </Field>
          <Field id="status" accessKey="S" label="tatus:" className="w-[48px]">
            <Select id="status" value="All" />
          </Field>
          <Field id="priority" label="Ins.Priority:" className="w-[48px]">
            <Select id="priority" value="All" />
          </Field>
          <Field id="review" label="Review Status" className="w-[60px]">
            <Select id="review" value="All" />
          </Field>
          <div className="pt-[9px]">
            <PushButton icon="openFolder" accessKey="R" label="etrieve" className="w-[59px] gap-[2px] outline-1 -outline-offset-2 outline-dotted outline-[#777]" />
          </div>
          <div role="tooltip" className="absolute left-[764px] top-[29px] z-10 border border-[#8a8a8a] bg-white px-[7px] py-[5px] font-['Open_Sans'] text-[9px] leading-[13px] whitespace-nowrap text-[#333] shadow-[3px_3px_3px_rgba(0,0,0,0.4)]">
            Right click to Save/Load Criteria
          </div>
        </form>

        {/* Results */}
        <section className="mx-[9px] mt-[4px] flex shrink-0 border border-[#93a9c6] border-t-0 bg-white">
          <div className="min-w-0 flex-1">
            <EligibilityTable />
            <Legend />
          </div>
          <div className="flex w-[12px] shrink-0 flex-col items-center bg-[#f4f4f4]">
            <svg viewBox="0 0 8 14" className="w-[8px] h-[14px]" aria-hidden="true">
              <path d="M1 9l3-3.500L7 9" fill="none" stroke="#444" strokeWidth="1.500" />
            </svg>
            <div className="h-[14px] w-full bg-[#cbcbcb]" />
            <svg viewBox="0 0 8 14" className="mt-auto w-[8px] h-[14px]" aria-hidden="true">
              <path d="M1 5.500L4 9l3-3.500" fill="none" stroke="#444" strokeWidth="1.500" />
            </svg>
          </div>
        </section>

        {/* Actions */}
        <section className="mx-[9px] mt-[4px] flex h-[26px] shrink-0 items-center border border-[#8fa9cb] bg-linear-to-b from-[#b3cef6] to-white px-[3px]">
          <div className="flex w-[45%] gap-[3px]">
            <PushButton icon="selectAll" label="Select All" className="w-[63px] gap-[2px]" />
            <PushButton icon="deselectAll" label="Deselect All" className="w-[75px]" />
            <PushButton icon="save" accessKey="S" label="ave" className="w-[54px] gap-[4px]" />
          </div>
          <PushButton icon="send" label="Send Inquiry" className="w-[77px] gap-[2px]" />
          <div className="flex flex-1 justify-end">
            <PushButton icon="print" before="Prin" accessKey="t" label="" className="w-[55px] gap-[6px]" />
          </div>
        </section>
      </main>

      {/* Status bar */}
      <footer className="mt-[2px] flex h-[13px] items-center border-t border-[#c9c9c9] bg-[#f0f0f0] whitespace-nowrap">
        <StatusCell className="w-[121px]">
          <span className="flex-1 pl-[2px]">Ready</span>
        </StatusCell>
        <StatusCell className="w-[67px]" />
        <StatusCell className="w-[149px]">
          <b className="font-['Liberation_Sans'] text-[9px] text-[#1c1ca8]">system</b>
        </StatusCell>
        <StatusCell className="flex-1" />
        <StatusCell className="w-[116px]">Ver: 14.0.0 Service Pack 1</StatusCell>
        <StatusCell className="w-[66px]">Build: 071416</StatusCell>
        <StatusCell className="w-[99px]">1stpctouch3 - 0030022</StatusCell>
        <StatusCell className="w-[19px]">
          <Icon name="network" className="w-[12px] h-[12px]" />
        </StatusCell>
        <div className="w-[90px] shrink-0 pl-[18px]">03/08/2017</div>
      </footer>
    </div>
  );
}
